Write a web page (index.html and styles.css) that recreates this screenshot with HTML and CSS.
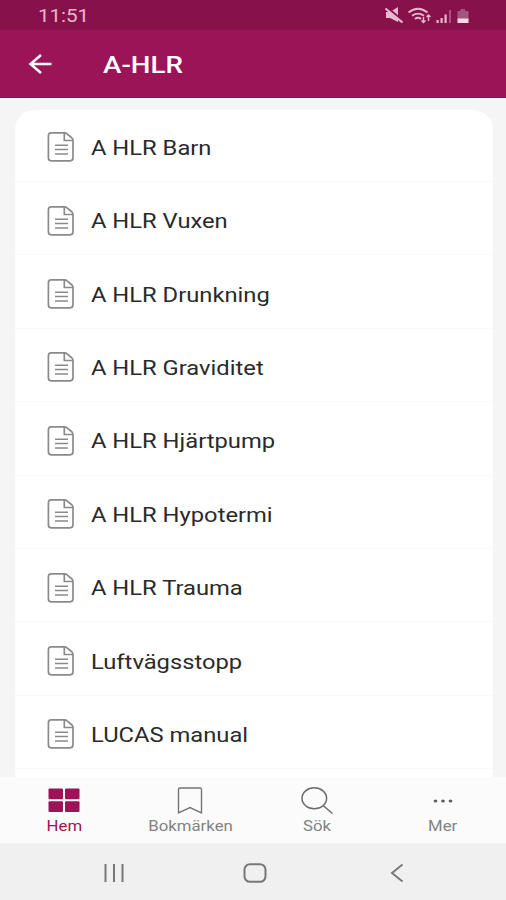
FILE: index.html
```
<!DOCTYPE html>
<html lang="sv">
<head>
    <meta charset="UTF-8">
    <meta name="viewport" content="width=device-width, initial-scale=1.0">
    <title>A-HLR</title>
    <link rel="stylesheet" href="styles.css">
</head>
<body>
    <svg class="defs" width="0" height="0">
        <symbol id="doc" viewBox="0 0 28 32">
            <path d="M4 1.8h13.5q1.500 0 2.500 1L25 7q1 1 1 2.500v17.300q0 3-3 3H4q-2.600 0-2.600-3V4.800q0-3 2.600-3zM17.300 1.800v7.700H26" fill="none" stroke="#8a8a8a" stroke-width="1.700" stroke-linejoin="round"/>
            <path d="M8 14.300h13M8 18.600h13M8 22.900h13" stroke="#8a8a8a" stroke-width="1.500"/>
        </symbol>
    </svg>

    <div class="status-bar">
        <span class="time">11:51</span>
        <svg class="status-icons" width="90" height="20" viewBox="0 0 90 20">
            <path d="M2 6h4l8-5v15l-8-4H2z" fill="#e8b7d0"/>
            <path d="M2 1l17 14" stroke="#87124b" stroke-width="2.500"/>
            <path d="M1.500 2.500l17 14" stroke="#e8b7d0" stroke-width="2.200"/>
            <g fill="none" stroke="#e8b7d0" stroke-width="1.800">
                <path d="M24.500 6.500q9.500-7.500 19 0M28 9.800q6-4.500 12 0M31 13q3-2.500 6 0"/>
                <path d="M39.500 11v6M37.500 14.500l2 2 2-2M44.500 15V9M42.500 11l2-2 2 2" stroke-width="1.400"/>
            </g>
            <path d="M52.500 14h2.200v3h-2.200zM56.500 12h2.200v5h-2.200zM60.500 8.500h2.200V17h-2.200z" fill="#e8b7d0"/>
            <path d="M65 4h2v13h-2z" fill="#a45480"/>
            <path d="M76.500 3h4.500v2h3.500v9h-11V5h3z" fill="#a45480"/>
            <path d="M73.500 12.500h11V17h-11z" fill="#f6d8e7"/>
        </svg>
    </div>

    <header>
        <svg class="back" width="24" height="20" viewBox="0 0 24 20">
            <path d="M13 1L2.500 10 13 19M2.500 10h21" fill="none" stroke="#fff" stroke-width="2.500"/>
        </svg>
        <h1>A-HLR</h1>
    </header>

    <main>
        <ul class="list">
            <li><svg><use href="#doc"/></svg><span>A HLR Barn</span></li>
            <li><svg><use href="#doc"/></svg><span>A HLR Vuxen</span></li>
            <li><svg><use href="#doc"/></svg><span>A HLR Drunkning</span></li>
            <li><svg><use href="#doc"/></svg><span>A HLR Graviditet</span></li>
            <li><svg><use href="#doc"/></svg><span>A HLR Hjärtpump</span></li>
            <li><svg><use href="#doc"/></svg><span>A HLR Hypotermi</span></li>
            <li><svg><use href="#doc"/></svg><span>A HLR Trauma</span></li>
            <li><svg><use href="#doc"/></svg><span>Luftvägsstopp</span></li>
            <li><svg><use href="#doc"/></svg><span>LUCAS manual</span></li>
        </ul>
    </main>

    <nav class="tabs">
        <a class="tab active">
            <svg width="32" height="30" viewBox="0 0 32 30">
                <g fill="#9c1458">
                    <rect x="0.500" y="2.500" width="14.500" height="10.800" rx="1"/>
                    <rect x="17" y="2.500" width="14.500" height="10.800" rx="1"/>
                    <rect x="0.500" y="15.200" width="14.500" height="10.800" rx="1"/>
                    <rect x="17" y="15.200" width="14.500" height="10.800" rx="1"/>
                </g>
            </svg>
            <span>Hem</span>
        </a>
        <a class="tab">
            <svg width="32" height="30" viewBox="0 0 32 30">
                <path d="M6 2h20q1.500 0 1.500 1.500V27L16 21.500 4.500 27V3.500Q4.500 2 6 2z" fill="none" stroke="#757575" stroke-width="1.400"/>
            </svg>
            <span>Bokmärken</span>
        </a>
        <a class="tab">
            <svg width="32" height="30" viewBox="0 0 32 30">
                <ellipse cx="13.300" cy="12.300" rx="12.300" ry="10.500" fill="none" stroke="#6c6c6c" stroke-width="1.500"/>
                <path d="M22 19.500l9.500 8" stroke="#6c6c6c" stroke-width="1.600"/>
            </svg>
            <span>Sök</span>
        </a>
        <a class="tab">
            <svg width="32" height="30" viewBox="0 0 32 30">
                <g fill="#606060">
                    <ellipse cx="8.500" cy="15" rx="1.900" ry="1.600"/>
                    <ellipse cx="16" cy="15" rx="1.900" ry="1.600"/>
                    <ellipse cx="23.500" cy="15" rx="1.900" ry="1.600"/>
                </g>
            </svg>
            <span>Mer</span>
        </a>
    </nav>

    <div class="system-nav">
        <svg width="24" height="20" viewBox="0 0 24 20">
            <path d="M3.500 1v18M12 1v18M20.500 1v18" stroke="#777" stroke-width="2"/>
        </svg>
        <svg width="24" height="20" viewBox="0 0 24 20">
            <rect x="1.500" y="1.200" width="21" height="17.600" rx="5.500" fill="none" stroke="#777" stroke-width="2"/>
        </svg>
        <svg width="24" height="20" viewBox="0 0 24 20">
            <path d="M18.500 1.500L8 10l10.500 8.500" fill="none" stroke="#777" stroke-width="1.900"/>
        </svg>
    </div>
</body>
</html>
```
FILE: styles.css
```
* {
    box-sizing: border-box;
}

body {
    font-family: Roboto, sans-serif;
    background-color: #f5f5f5;
    margin: 0;
    height: 900px;
    display: flex;
    flex-direction: column;
    overflow: hidden;
}

.defs {
    display: none;
}

.status-bar {
    height: 30px;
    flex: none;
    display: flex;
    align-items: center;
    justify-content: space-between;
    padding: 2px 32px 0 38px;
    background-color: #87124b;
}

.time {
    font-size: 18.5px;
    color: #e8b7d0;
    transform: scaleX(1.11);
    transform-origin: left;
}

header {
    height: 68px;
    flex: none;
    display: flex;
    align-items: center;
    padding-left: 28px;
    background-color: #9c1458;
    border-bottom: 1px solid #8b0f4c;
}

h1 {
    margin: 0 0 0 51px;
    padding-top: 2px;
    font-size: 24px;
    font-weight: 500;
    color: #fff;
    transform: scaleX(1.156);
    transform-origin: left;
}

main {
    height: 679px;
    flex: none;
    padding: 12px 13px 0 15px;
    overflow: hidden;
}

.list {
    height: 667px;
    margin: 0;
    padding: 0;
    list-style: none;
    background-color: #fff;
    border-radius: 20px 20px 0 0;
    overflow: hidden;
}

.list li {
    display: flex;
    align-items: center;
    height: 73.4px;
    padding: 5px 0 0 32px;
    border-bottom: 1px solid #fafafa;
}

.list li:first-child {
    height: 72px;
    padding-top: 3px;
}

.list svg {
    width: 28px;
    height: 32px;
}

.list span {
    margin-left: 16px;
    padding-top: 1px;
    font-size: 20.5px;
    color: #2a2a2a;
    white-space: nowrap;
    transform: scaleX(1.158);
    transform-origin: left;
}

.tabs {
    height: 66px;
    flex: none;
    display: flex;
    padding-left: 1px;
    background-color: #fbfbfb;
}

.tab {
    flex: 1;
    display: flex;
    flex-direction: column;
    align-items: center;
    gap: 2px;
    padding-top: 9px;
    font-size: 14.5px;
    line-height: 18px;
    color: #828282;
}

.tab span {
    transform: scaleX(1.156);
}

.tab.active {
    color: #9c1458;
}

.system-nav {
    flex: 1;
    display: flex;
    justify-content: space-between;
    align-items: center;
    padding: 2px 98px 0 102px;
    background-color: #f0f0f0;
}
```
